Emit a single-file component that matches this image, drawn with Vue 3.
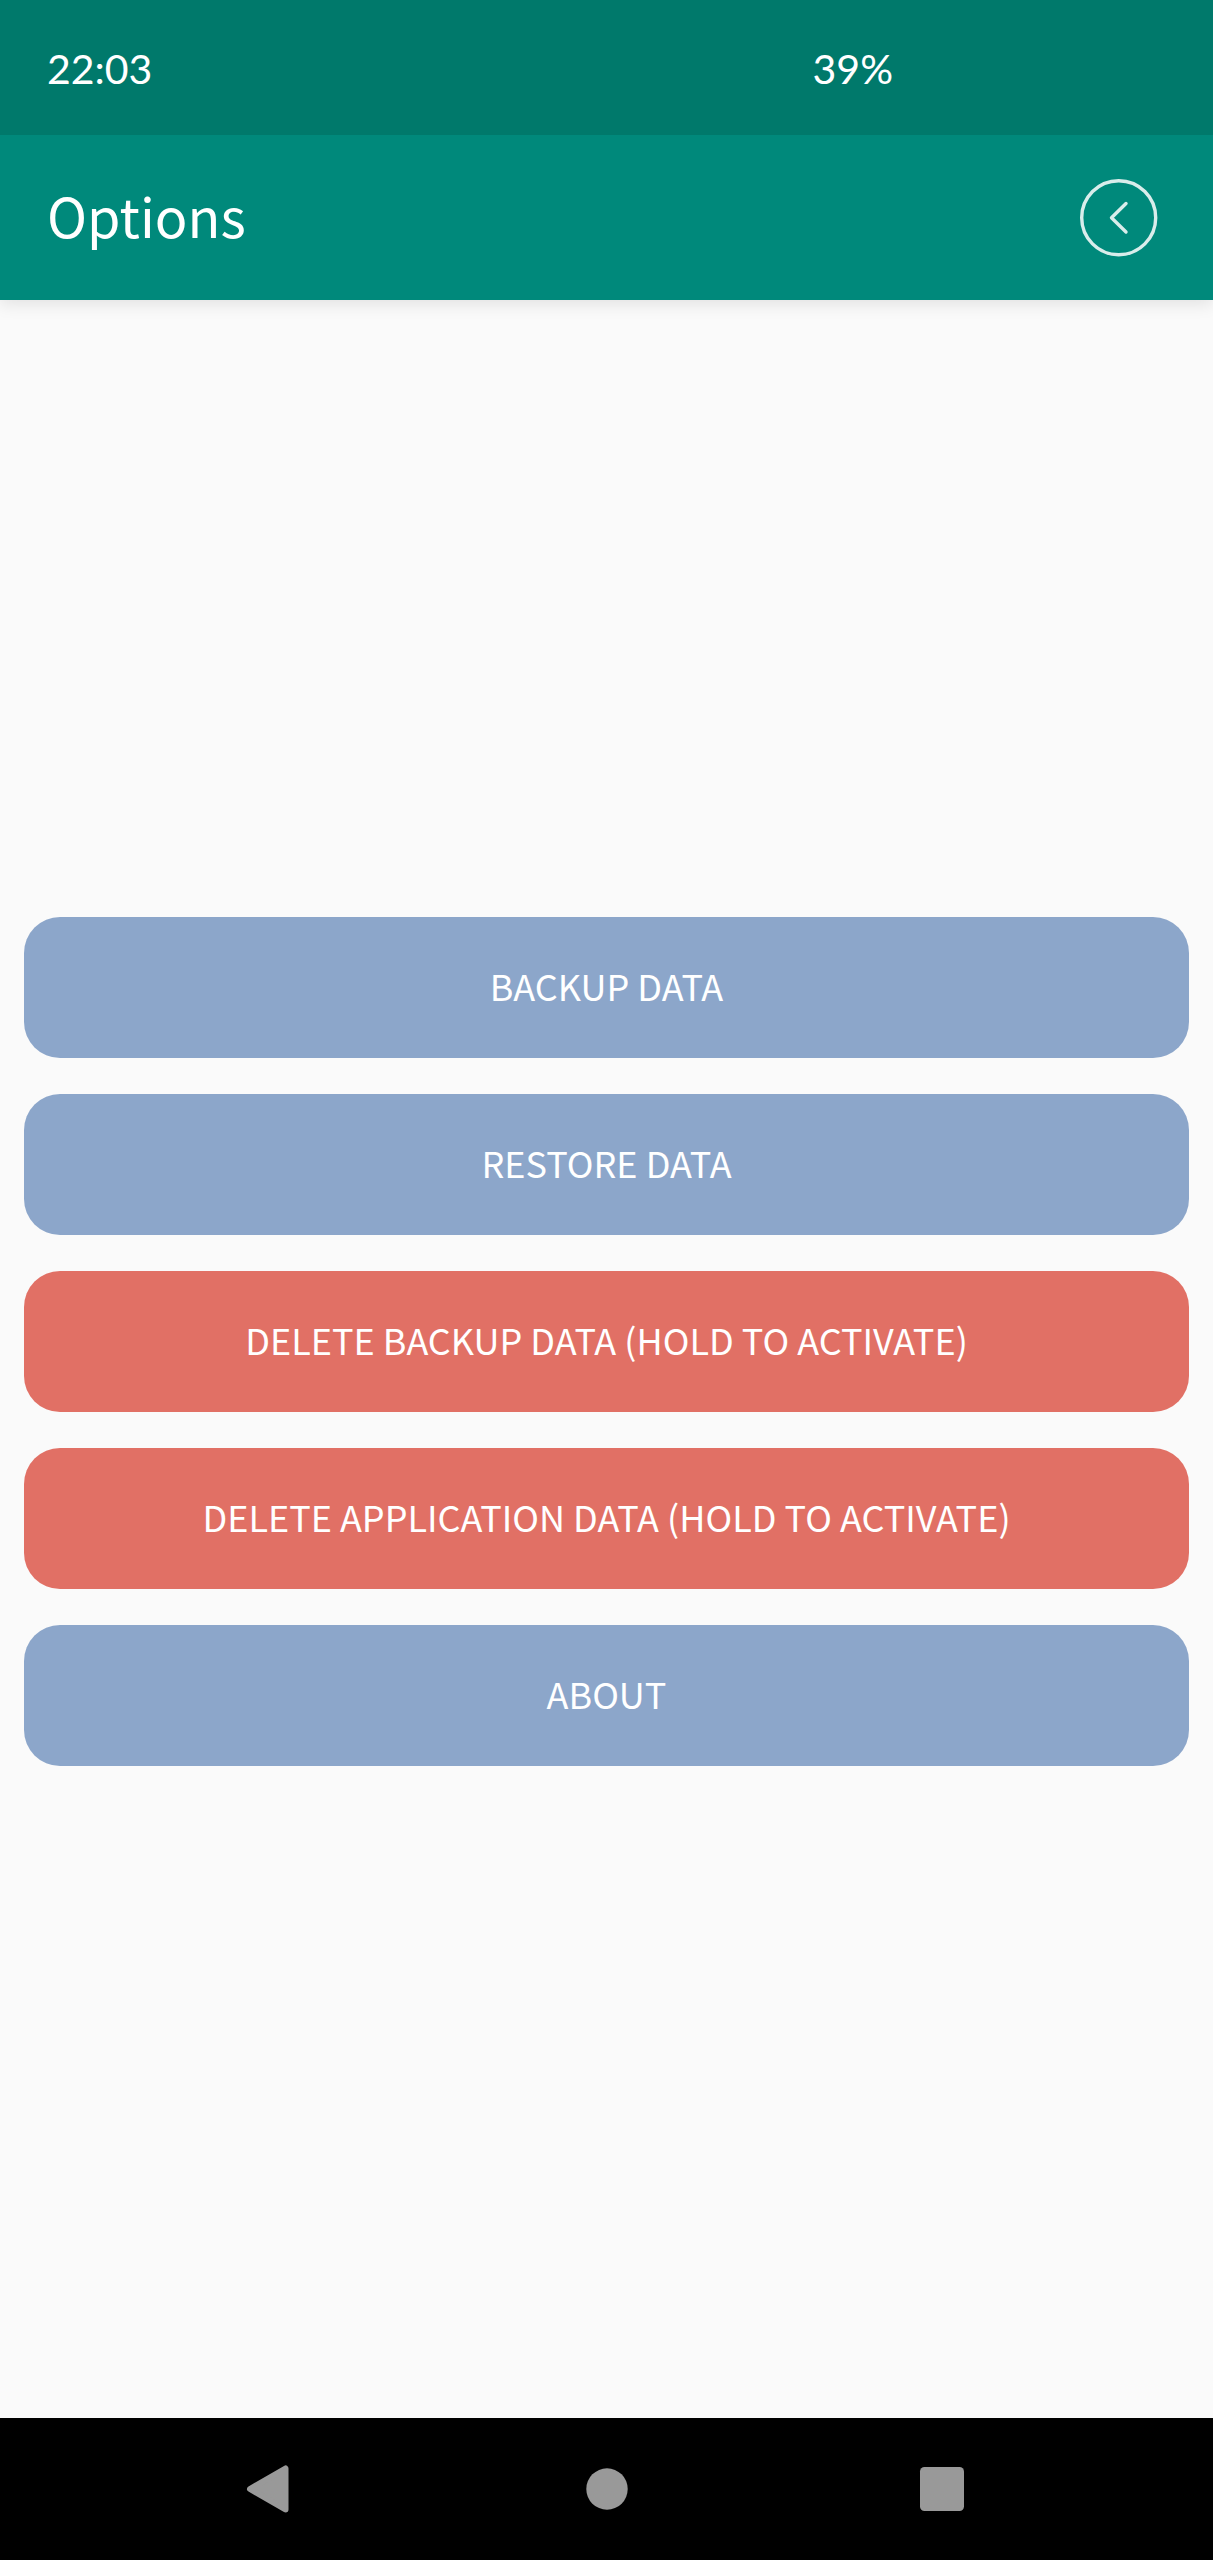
<script setup>
const actions = [
  { label: 'BACKUP DATA', danger: false },
  { label: 'RESTORE DATA', danger: false },
  { label: 'DELETE BACKUP DATA (HOLD TO ACTIVATE)', danger: true },
  { label: 'DELETE APPLICATION DATA (HOLD TO ACTIVATE)', danger: true },
  { label: 'ABOUT', danger: false },
]
</script>

<template>
  <div class="screen">
    <div class="status">
      <span>22:03</span>
      <span>39%</span>
    </div>
    <header class="toolbar">
      <h1>Options</h1>
      <button class="back" type="button" aria-label="Back">
        <svg width="80" height="80" viewBox="0 0 80 80" fill="none" stroke="#fff" stroke-opacity="0.85">
          <circle cx="39.7" cy="39.7" r="37" stroke-width="3.4" />
          <path d="M47 25.5 L32.5 39.8 L47 54" stroke-width="3.4" stroke-linecap="round" stroke-linejoin="round" />
        </svg>
      </button>
    </header>
    <main class="content">
      <button
        v-for="action in actions"
        :key="action.label"
        type="button"
        class="action"
        :class="{ danger: action.danger }"
      >
        {{ action.label }}
      </button>
    </main>
    <nav class="navbar">
      <button type="button" aria-label="Navigate back">
        <svg width="56" height="56" viewBox="0 0 56 56">
          <path d="M6 28 L41.5 7.5 V48.5 Z" fill="#999" stroke="#999" stroke-width="6" stroke-linejoin="round" />
        </svg>
      </button>
      <button type="button" aria-label="Home">
        <svg width="56" height="56" viewBox="0 0 56 56"><circle cx="28" cy="28" r="20.7" fill="#999" /></svg>
      </button>
      <button type="button" aria-label="Recent apps">
        <svg width="56" height="56" viewBox="0 0 56 56"><rect x="6" y="6" width="44" height="44" rx="4.5" fill="#999" /></svg>
      </button>
    </nav>
  </div>
</template>

<style>
body {
  margin: 0;
}
</style>

<style scoped>
.screen {
  display: flex;
  flex-direction: column;
  min-height: 100vh;
  background: #fafafa;
  color: #fff;
  font-family: "Noto Sans CJK SC", "Noto Sans", sans-serif;
}
button {
  padding: 0;
  border: 0;
  background: none;
  color: inherit;
  font: inherit;
  cursor: pointer;
}
svg {
  display: block;
}
.status {
  position: relative;
  z-index: 1;
  display: flex;
  align-items: center;
  justify-content: space-between;
  height: 135px;
  padding: 2px 320px 0 47px;
  box-sizing: border-box;
  background: #00796b;
  font-family: Lato, sans-serif;
  font-size: 41px;
}
.toolbar {
  display: flex;
  align-items: center;
  justify-content: space-between;
  height: 165px;
  padding: 0 54px 0 47px;
  box-sizing: border-box;
  background: #00897b;
  box-shadow: 0 4px 16px rgba(0, 0, 0, 0.1);
}
h1 {
  margin: 0;
  padding-bottom: 6px;
  font-size: 54px;
  font-weight: 400;
}
.content {
  display: flex;
  flex: 1;
  flex-direction: column;
  justify-content: center;
  padding: 0 24px;
}
.action {
  height: 141px;
  margin-bottom: 36px;
  padding-bottom: 4px;
  border-radius: 36px;
  background: #8ca6ca;
  font-size: 36px;
}
.action.danger {
  background: #e17065;
}
.navbar {
  display: flex;
  height: 142px;
  padding: 0 104px;
  background: #000;
}
.navbar button {
  display: flex;
  flex: 1;
  align-items: center;
  justify-content: center;
}
</style>
